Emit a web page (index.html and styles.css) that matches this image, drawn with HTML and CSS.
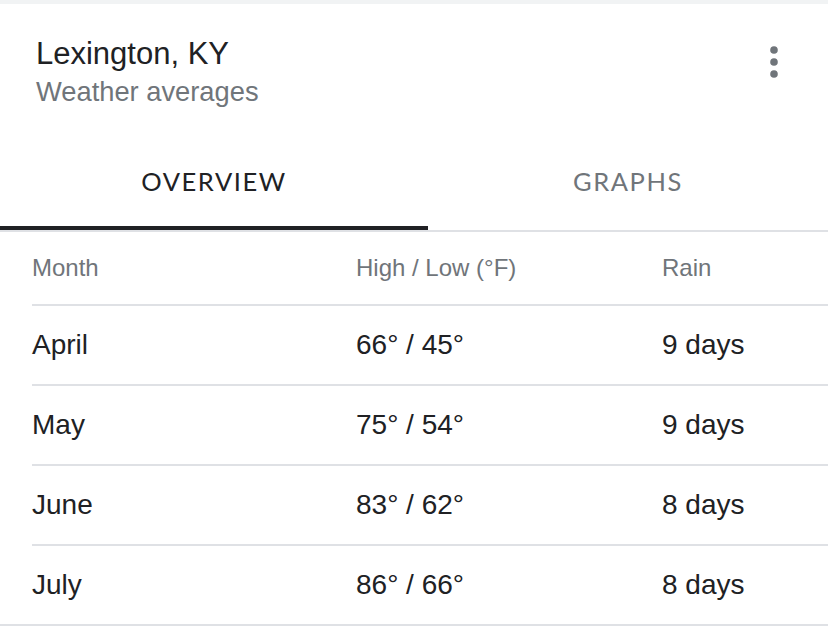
FILE: index.html
```html
<!DOCTYPE html>
<html lang="en">
<head>
<meta charset="utf-8">
<title>Lexington, KY weather averages</title>
<link rel="stylesheet" href="styles.css">
</head>
<body>
<div class="strip"></div>
<div class="card">
  <div class="header">
    <div class="titles">
      <div class="title">Lexington, KY</div>
      <div class="subtitle">Weather averages</div>
    </div>
    <svg class="more" width="8" height="32" viewBox="0 0 8 32" aria-hidden="true">
      <circle cx="4" cy="4" r="3.8" fill="#70757a"/>
      <circle cx="4" cy="16" r="3.8" fill="#70757a"/>
      <circle cx="4" cy="28" r="3.8" fill="#70757a"/>
    </svg>
  </div>
  <div class="tabs">
    <div class="tab tab-active">OVERVIEW</div>
    <div class="tab tab-graphs">GRAPHS</div>
  </div>
  <div class="table">
    <div class="row row-head">
      <div>Month</div>
      <div>High / Low (°F)</div>
      <div>Rain</div>
    </div>
    <div class="row">
      <div>April</div>
      <div>66° / 45°</div>
      <div>9 days</div>
    </div>
    <div class="row">
      <div>May</div>
      <div>75° / 54°</div>
      <div>9 days</div>
    </div>
    <div class="row">
      <div>June</div>
      <div>83° / 62°</div>
      <div>8 days</div>
    </div>
    <div class="row row-last">
      <div>July</div>
      <div>86° / 66°</div>
      <div>8 days</div>
    </div>
  </div>
</div>
</body>
</html>
```
FILE: styles.css
```css
html, body {
  margin: 0;
  padding: 0;
  background: #ffffff;
}

body {
  font-family: "Liberation Sans", Arial, sans-serif;
  color: #202124;
  width: 828px;
  overflow: hidden;
}

.strip {
  height: 4px;
  background: #f1f3f4;
}

.card {
  border-bottom: 2px solid #dfe1e5;
}

.header {
  display: flex;
  justify-content: space-between;
  align-items: flex-start;
  padding: 32px 50px 1px 36px;
}

.title {
  font-size: 31px;
  line-height: 36px;
  color: #202124;
}

.subtitle {
  font-size: 27.3px;
  line-height: 39px;
  color: #70757a;
}

.more {
  display: block;
  margin-top: 10px;
}

.tabs {
  display: flex;
  border-bottom: 2px solid #dfe1e5;
}

.tab {
  width: 428px;
  flex: none;
  text-align: center;
  padding: 54px 0 30px;
  line-height: 30px;
  font-family: "Lato", "Open Sans", sans-serif;
  font-size: 25.5px;
  letter-spacing: 1.6px;
  color: #70757a;
  border-bottom: 4px solid transparent;
}

.tab-graphs {
  width: 400px;
}

.tab-active {
  color: #202124;
  border-bottom-color: #202124;
}

.table {
  padding-left: 32px;
}

.row {
  display: grid;
  grid-template-columns: 324px 306px 1fr;
  align-items: center;
  height: 78px;
  border-bottom: 2px solid #dfe1e5;
  font-size: 28px;
  color: #202124;
}

.row-head {
  height: 72px;
  font-size: 24px;
  color: #70757a;
}

.row-last {
  border-bottom: none;
}
```
